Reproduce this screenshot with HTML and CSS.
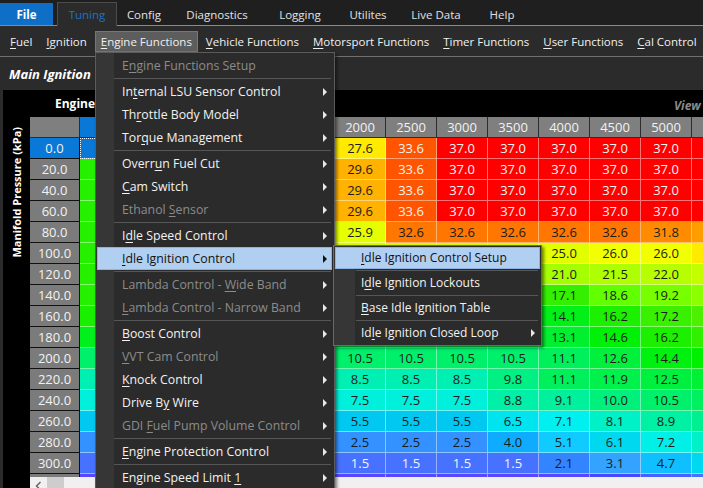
FILE: index.html
```html
<!DOCTYPE html>
<html>
<head>
<meta charset="utf-8">
<link rel="stylesheet" href="styles.css">
</head>
<body>
<div class="tabs">
  <div class="tab file">File</div>
  <div class="tab active">Tuning</div>
  <div class="tab t-config">Config</div>
  <div class="tab t-diag">Diagnostics</div>
  <div class="tab t-log">Logging</div>
  <div class="tab t-util">Utilites</div>
  <div class="tab t-live">Live Data</div>
  <div class="tab t-help">Help</div>
</div>
<div class="toolbar">
  <span class="tb"><u>F</u>uel</span>
  <span class="tb"><u>I</u>gnition</span>
  <span class="tb open"><u>E</u>ngine Functions</span>
  <span class="tb"><u>V</u>ehicle Functions</span>
  <span class="tb"><u>M</u>otorsport Functions</span>
  <span class="tb"><u>T</u>imer Functions</span>
  <span class="tb"><u>U</u>ser Functions</span>
  <span class="tb"><u>C</u>al Control</span>
</div>
<div class="title">Main Ignition</div>
<div class="panel">
  <div class="panel-head">
    <span class="axis-x">Engine</span>
    <span class="view">View 3D</span>
  </div>
  <div class="panel-body">
    <div class="axis-y"><span>Manifold Pressure (kPa)</span></div>
    <div class="grid-wrap">
      <div class="grid-view">
        <div class="grid">
          <div class="corner"></div><div class="ch sel"></div><div class="ch"></div><div class="ch"></div><div class="ch"></div><div class="ch"></div><div class="ch">2000</div><div class="ch">2500</div><div class="ch">3000</div><div class="ch">3500</div><div class="ch">4000</div><div class="ch">4500</div><div class="ch">5000</div><div class="ch">5500</div>

          <div class="rh sel">0.0</div><div class="c cur"></div><div class="c" style="--h:101"></div><div class="c" style="--h:87"></div><div class="c" style="--h:70"></div><div class="c" style="--h:55"></div><div class="c" style="--h:55">27.6</div><div class="c lt" style="--h:20">33.6</div><div class="c lt" style="--h:0">37.0</div><div class="c lt" style="--h:0">37.0</div><div class="c lt" style="--h:0">37.0</div><div class="c lt" style="--h:0">37.0</div><div class="c lt" style="--h:0">37.0</div><div class="c lt" style="--h:0">37.0</div>

          <div class="rh">20.0</div><div class="c g" style="--h:111"></div><div class="c g" style="--h:101"></div><div class="c" style="--h:81"></div><div class="c" style="--h:67"></div><div class="c" style="--h:42"></div><div class="c" style="--h:42">29.6</div><div class="c lt" style="--h:20">33.6</div><div class="c lt" style="--h:0">37.0</div><div class="c lt" style="--h:0">37.0</div><div class="c lt" style="--h:0">37.0</div><div class="c lt" style="--h:0">37.0</div><div class="c lt" style="--h:0">37.0</div><div class="c lt" style="--h:0">37.0</div>

          <div class="rh">40.0</div><div class="c g" style="--h:111"></div><div class="c g" style="--h:101"></div><div class="c" style="--h:81"></div><div class="c" style="--h:67"></div><div class="c" style="--h:42"></div><div class="c" style="--h:42">29.6</div><div class="c lt" style="--h:20">33.6</div><div class="c lt" style="--h:0">37.0</div><div class="c lt" style="--h:0">37.0</div><div class="c lt" style="--h:0">37.0</div><div class="c lt" style="--h:0">37.0</div><div class="c lt" style="--h:0">37.0</div><div class="c lt" style="--h:0">37.0</div>

          <div class="rh">60.0</div><div class="c g" style="--h:111"></div><div class="c g" style="--h:101"></div><div class="c" style="--h:81"></div><div class="c" style="--h:67"></div><div class="c" style="--h:42"></div><div class="c" style="--h:42">29.6</div><div class="c lt" style="--h:20">33.6</div><div class="c lt" style="--h:0">37.0</div><div class="c lt" style="--h:0">37.0</div><div class="c lt" style="--h:0">37.0</div><div class="c lt" style="--h:0">37.0</div><div class="c lt" style="--h:0">37.0</div><div class="c lt" style="--h:0">37.0</div>

          <div class="rh">80.0</div><div class="c g" style="--h:111"></div><div class="c g" style="--h:101"></div><div class="c" style="--h:87"></div><div class="c" style="--h:74"></div><div class="c" style="--h:66"></div><div class="c" style="--h:66">25.9</div><div class="c" style="--h:28">32.6</div><div class="c" style="--h:28">32.6</div><div class="c" style="--h:28">32.6</div><div class="c" style="--h:28">32.6</div><div class="c" style="--h:28">32.6</div><div class="c" style="--h:33">31.8</div><div class="c" style="--h:37">31.0</div>

          <div class="rh">100.0</div><div class="c g" style="--h:111"></div><div class="c g" style="--h:108"></div><div class="c g" style="--h:101"></div><div class="c" style="--h:81"></div><div class="c" style="--h:70"></div><div class="c" style="--h:70"></div><div class="c" style="--h:69"></div><div class="c" style="--h:69"></div><div class="c" style="--h:68"></div><div class="c" style="--h:67">25.0</div><div class="c" style="--h:63">26.0</div><div class="c" style="--h:63">26.0</div><div class="c" style="--h:55">27.6</div>

          <div class="rh">120.0</div><div class="c g" style="--h:111"></div><div class="c g" style="--h:108"></div><div class="c g" style="--h:101"></div><div class="c" style="--h:92"></div><div class="c" style="--h:87"></div><div class="c" style="--h:87"></div><div class="c" style="--h:84"></div><div class="c" style="--h:84"></div><div class="c" style="--h:82"></div><div class="c" style="--h:81">21.0</div><div class="c" style="--h:79">21.5</div><div class="c" style="--h:77">22.0</div><div class="c" style="--h:74">23.0</div>

          <div class="rh">140.0</div><div class="c g" style="--h:111"></div><div class="c g" style="--h:111"></div><div class="c g" style="--h:111"></div><div class="c g" style="--h:111"></div><div class="c g" style="--h:114"></div><div class="c g" style="--h:114"></div><div class="c g" style="--h:114"></div><div class="c g" style="--h:114"></div><div class="c g" style="--h:111"></div><div class="c g" style="--h:107">17.1</div><div class="c" style="--h:97">18.6</div><div class="c" style="--h:92">19.2</div><div class="c" style="--h:87">20.0</div>

          <div class="rh">160.0</div><div class="c g" style="--h:114"></div><div class="c g" style="--h:127"></div><div class="c g" style="--h:130"></div><div class="c g" style="--h:133"></div><div class="c g" style="--h:133"></div><div class="c g" style="--h:133"></div><div class="c g" style="--h:133"></div><div class="c g" style="--h:133"></div><div class="c g" style="--h:130"></div><div class="c g" style="--h:126">14.1</div><div class="c g" style="--h:113">16.2</div><div class="c g" style="--h:106">17.2</div><div class="c g" style="--h:101">18.0</div>

          <div class="rh">180.0</div><div class="c g" style="--h:127"></div><div class="c g" style="--h:133"></div><div class="c g" style="--h:136"></div><div class="c g" style="--h:139"></div><div class="c g" style="--h:139"></div><div class="c g" style="--h:139"></div><div class="c g" style="--h:139"></div><div class="c g" style="--h:139"></div><div class="c g" style="--h:136"></div><div class="c g" style="--h:132">13.1</div><div class="c g" style="--h:122">14.6</div><div class="c g" style="--h:113">16.2</div><div class="c g" style="--h:108">17.0</div>

          <div class="rh">200.0</div><div class="c g" style="--h:147"></div><div class="c g" style="--h:147"></div><div class="c g" style="--h:147"></div><div class="c g" style="--h:147"></div><div class="c g" style="--h:147"></div><div class="c g" style="--h:147">10.5</div><div class="c g" style="--h:147">10.5</div><div class="c g" style="--h:147">10.5</div><div class="c g" style="--h:147">10.5</div><div class="c g" style="--h:143">11.1</div><div class="c g" style="--h:135">12.6</div><div class="c g" style="--h:124">14.4</div><div class="c g" style="--h:120">15.0</div>

          <div class="rh">220.0</div><div class="c g" style="--h:165"></div><div class="c g" style="--h:165"></div><div class="c g" style="--h:165"></div><div class="c g" style="--h:165"></div><div class="c g" style="--h:165"></div><div class="c g" style="--h:165">8.5</div><div class="c g" style="--h:165">8.5</div><div class="c g" style="--h:165">8.5</div><div class="c g" style="--h:153">9.8</div><div class="c g" style="--h:143">11.1</div><div class="c g" style="--h:139">11.9</div><div class="c g" style="--h:136">12.5</div><div class="c g" style="--h:133">13.0</div>

          <div class="rh">240.0</div><div class="c g" style="--h:175"></div><div class="c g" style="--h:175"></div><div class="c g" style="--h:175"></div><div class="c g" style="--h:175"></div><div class="c g" style="--h:175"></div><div class="c g" style="--h:175">7.5</div><div class="c g" style="--h:175">7.5</div><div class="c g" style="--h:175">7.5</div><div class="c g" style="--h:162">8.8</div><div class="c g" style="--h:159">9.1</div><div class="c g" style="--h:151">10.0</div><div class="c g" style="--h:147">10.5</div><div class="c g" style="--h:144">11.0</div>

          <div class="rh">260.0</div><div class="c g" style="--h:190"></div><div class="c g" style="--h:190"></div><div class="c g" style="--h:190"></div><div class="c g" style="--h:190"></div><div class="c g" style="--h:190"></div><div class="c g" style="--h:190">5.5</div><div class="c g" style="--h:190">5.5</div><div class="c g" style="--h:190">5.5</div><div class="c g" style="--h:183">6.5</div><div class="c g" style="--h:180">7.1</div><div class="c g" style="--h:170">8.1</div><div class="c g" style="--h:161">8.9</div><div class="c g" style="--h:156">9.5</div>

          <div class="rh">280.0</div><div class="c b2" style="--h:212"></div><div class="c b2" style="--h:212"></div><div class="c b2" style="--h:212"></div><div class="c b2" style="--h:212"></div><div class="c b2" style="--h:212"></div><div class="c b2" style="--h:212">2.5</div><div class="c b2" style="--h:212">2.5</div><div class="c b2" style="--h:212">2.5</div><div class="c b1" style="--h:201">4.0</div><div class="c b1" style="--h:193">5.1</div><div class="c g" style="--h:186">6.1</div><div class="c g" style="--h:178">7.2</div><div class="c g" style="--h:170">8.0</div>

          <div class="rh">300.0</div><div class="c b3" style="--h:226"></div><div class="c b3" style="--h:226"></div><div class="c b3" style="--h:226"></div><div class="c b3" style="--h:226"></div><div class="c b3" style="--h:226"></div><div class="c b3 lt" style="--h:226">1.5</div><div class="c b3 lt" style="--h:226">1.5</div><div class="c b3 lt" style="--h:226">1.5</div><div class="c b3 lt" style="--h:226">1.5</div><div class="c b2" style="--h:216">2.1</div><div class="c b2" style="--h:207">3.1</div><div class="c b1" style="--h:196">4.7</div><div class="c g" style="--h:186">6.0</div>

          <div class="rh"></div><div class="c b3" style="--h:245"></div><div class="c b3" style="--h:245"></div><div class="c b3" style="--h:245"></div><div class="c b3" style="--h:245"></div><div class="c b3" style="--h:245"></div><div class="c b3" style="--h:245"></div><div class="c b3" style="--h:245"></div><div class="c b3" style="--h:245"></div><div class="c b3" style="--h:245"></div><div class="c b3" style="--h:245"></div><div class="c b3" style="--h:240"></div><div class="c b3" style="--h:232"></div><div class="c b3" style="--h:226"></div>
        </div>
      </div>
      <div class="hscroll">
        <svg class="arr" width="7" height="10" viewBox="0 0 7 10"><polyline points="5.5,1 1.5,5 5.5,9" fill="none" stroke="#606060" stroke-width="1.4"/></svg>
        <div class="thumb"></div>
      </div>
    </div>
  </div>
</div>

<div class="menu">
  <div class="mi dis">E<u>n</u>gine Functions Setup</div>
  <div class="sep"></div>
  <div class="mi sub">In<u>t</u>ernal LSU Sensor Control</div>
  <div class="mi sub">Th<u>r</u>ottle Body Model</div>
  <div class="mi sub">Tor<u>q</u>ue Management</div>
  <div class="sep"></div>
  <div class="mi sub">Overr<u>u</u>n Fuel Cut</div>
  <div class="mi sub"><u>C</u>am Switch</div>
  <div class="mi dis sub">Ethanol <u>S</u>ensor</div>
  <div class="sep"></div>
  <div class="mi sub">I<u>d</u>le Speed Control</div>
  <div class="mi sub hot"><u>I</u>dle Ignition Control</div>
  <div class="sep"></div>
  <div class="mi dis sub">Lambda Control - <u>W</u>ide Band</div>
  <div class="mi dis sub"><u>L</u>ambda Control - Narrow Band</div>
  <div class="sep"></div>
  <div class="mi sub"><u>B</u>oost Control</div>
  <div class="mi dis sub"><u>V</u>VT Cam Control</div>
  <div class="mi sub"><u>K</u>nock Control</div>
  <div class="mi sub">Drive B<u>y</u> Wire</div>
  <div class="mi dis sub">GDI <u>F</u>uel Pump Volume Control</div>
  <div class="sep"></div>
  <div class="mi sub"><u>E</u>ngine Protection Control</div>
  <div class="sep"></div>
  <div class="mi sub">Engine Speed Limit <u>1</u></div>
</div>

<div class="submenu">
  <div class="si hot"><u>I</u>dle Ignition Control Setup</div>
  <div class="ssep"></div>
  <div class="si">I<u>d</u>le Ignition Lockouts</div>
  <div class="ssep"></div>
  <div class="si"><u>B</u>ase Idle Ignition Table</div>
  <div class="ssep"></div>
  <div class="si sub">Id<u>l</u>e Ignition Closed Loop</div>
</div>
</body>
</html>
```
FILE: styles.css
```css
* { box-sizing: border-box; }
html, body { margin: 0; height: 100%; overflow: hidden; }
body {
  background: #2b2b2b;
  font-family: "Open Sans", "Noto Sans", sans-serif;
  font-size: 12px;
  color: #f0f0f0;
  position: relative;
}
u { text-underline-offset: 2px; }

/* top tabs */
.tabs {
  height: 26px;
  background: #1f1f1f;
  border-bottom: 1px solid #8a8a8a;
  display: flex;
  align-items: flex-end;
  font-size: 11.5px;
}
.tab {
  height: 22px;
  display: flex;
  align-items: center;
  justify-content: center;
  color: #e2e2e2;
  white-space: nowrap;
}
.tab.file { width: 53px; background: #0f6fc6; color: #fff; font-weight: bold; margin-right: 4px; }
.tab.active {
  width: 60px; height: 24px; margin-bottom: -1px;
  background: #2b2b2b; border: 1px solid #4c4c4c; border-bottom: none;
  color: #1f72c6;
}
.t-config { width: 54px; }
.t-diag { width: 92px; }
.t-log { width: 74px; }
.t-util { width: 62px; }
.t-live { width: 74px; }
.t-help { width: 58px; }

/* toolbar */
.toolbar {
  height: 31px;
  border-bottom: 1px solid #707070;
  display: flex;
  align-items: center;
  padding-left: 3px;
  white-space: nowrap;
  font-size: 11.5px;
}
.tb {
  padding: 0 5px;
  margin: 0 1px;
  height: 21px;
  line-height: 19px;
  border: 1px solid transparent;
}
.tb.open { background: #5d5d5d; border-color: #777; }

/* title */
.title {
  height: 33px;
  padding-left: 9px;
  display: flex;
  align-items: center;
  font-weight: bold;
  font-style: italic;
  font-size: 13px;
  color: #fff;
}

/* panel */
.panel { margin-left: 3px; background: #000; height: 400px; }
.panel-head {
  height: 27px;
  display: flex;
  align-items: center;
  white-space: nowrap;
}
.axis-x { padding-left: 52px; font-weight: bold; color: #fff; }
.view {
  margin-left: auto;
  width: 29px;
  overflow: hidden;
  font-weight: bold;
  font-style: italic;
  color: #8a8a8a;
  padding-top: 3px;
}
.panel-body { display: flex; }
.axis-y { width: 27px; display: flex; justify-content: center; }
.axis-y span {
  writing-mode: vertical-rl;
  transform: rotate(180deg);
  margin-top: 10px;
  align-self: flex-start;
  font-weight: bold;
  font-size: 11px;
  color: #fff;
  white-space: nowrap;
}
.grid-wrap { flex: 1; min-width: 0; overflow: hidden; }
.grid-view { height: 360px; overflow: hidden; }
.grid {
  display: grid;
  grid-template-columns: 50px repeat(13, 51px);
  grid-auto-rows: 21px;
  font-size: 13px;
}
.grid > div {
  display: flex;
  align-items: center;
  justify-content: center;
}
.corner, .ch {
  background: #7f7f7f;
  color: #f2f2f2;
  border-right: 1px solid #2d2d2d;
  border-bottom: 1px solid #2d2d2d;
}
.rh {
  background: #7b7b7b;
  color: #f2f2f2;
  border-right: 1px solid #111;
  border-bottom: 1px solid #111;
}
.grid > .sel { background: #0a78d7; }
.c {
  background: hsl(var(--h, 0) 100% var(--l, 50%));
  color: #1c1c1c;
  border-right: 1px solid rgba(255, 255, 255, .45);
  border-bottom: 1px solid rgba(255, 255, 255, .45);
}
.c.g { --l: 47%; }
.c.b1 { --l: 53%; }
.c.b2 { --l: 60%; }
.c.b3 { --l: 64%; }
.c.lt { color: #f4f4f4; }
.grid > .cur { background: #0a78d7; outline: 1px dotted #fff; outline-offset: -1px; }

.hscroll {
  height: 17px;
  background: #f0f0f0;
  display: flex;
  align-items: center;
  padding-left: 5px;
}
.thumb { width: 17px; height: 100%; background: #cdcdcd; margin-left: 5px; }

/* dropdown menu */
.menu {
  position: absolute;
  left: 95px;
  top: 52px;
  width: 240px;
  padding: 1px 0;
  background: linear-gradient(to right, #363636 0 18px, #2b2b2b 18px);
  border: 1px solid #5b5b5b;
  box-shadow: 2px 2px 3px rgba(0, 0, 0, .5);
  white-space: nowrap;
  font-size: 12.3px;
  z-index: 2;
}
.mi {
  height: 23px;
  line-height: 23px;
  padding-left: 25px;
  margin: 0 2px 0 1px;
  position: relative;
  color: #f2f2f2;
}
.mi.dis { color: #8b8b8b; }
.sub::after {
  content: "";
  position: absolute;
  right: 5px;
  top: 50%;
  margin-top: -4px;
  border-left: 4px solid #e8e8e8;
  border-top: 4px solid transparent;
  border-bottom: 4px solid transparent;
}
.mi.hot {
  background: #b1cff1;
  border: 1px solid #8fb2de;
  color: #111;
  padding-left: 24px;
  line-height: 21px;
}
.hot.sub::after { border-left-color: #111; right: 4px; }
.sep { height: 1px; background: #565656; margin: 1px 3px 1px 18px; }

.submenu {
  position: absolute;
  left: 333px;
  top: 245px;
  width: 209px;
  padding: 1px 0;
  background: linear-gradient(to right, #363636 0 21px, #2b2b2b 21px);
  border: 1px solid #6a6a6a;
  box-shadow: 2px 2px 3px rgba(0, 0, 0, .5);
  white-space: nowrap;
  font-size: 12px;
  z-index: 3;
}
.si {
  height: 22px;
  line-height: 22px;
  padding-left: 26px;
  margin: 0 1px;
  position: relative;
  color: #f2f2f2;
}
.si.hot {
  background: #b1cff1;
  border: 1px solid #8fb2de;
  color: #111;
  padding-left: 25px;
  line-height: 20px;
}
.ssep { height: 1px; background: #565656; margin: 1px 3px 1px 22px; }
```
